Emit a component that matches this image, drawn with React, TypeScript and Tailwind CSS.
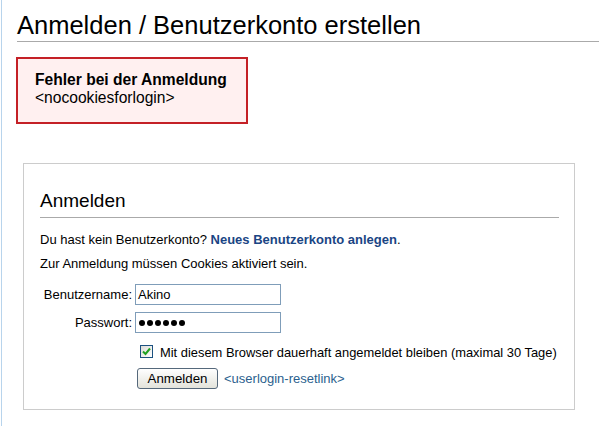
export default function App() {
  return (
    <div className="min-h-[426px] w-[599px] overflow-hidden bg-white pl-[1px] font-['Liberation_Sans',Arial,sans-serif] text-black">
      <div className="min-h-[426px] border-l border-[#b8d4ec] pl-[14px]">
        <h1 className="ml-[1px] border-b border-[#aaaaaa] pt-[10px] pb-[1px] text-[25.5px] leading-[30px] font-normal">
          Anmelden / Benutzerkonto erstellen
        </h1>

        <div className="mt-[15px] w-[232px] border-2 border-[#c42026] bg-[#fff0f0] pt-[12px] pb-[15px] pl-[17px] text-[15.6px] leading-[18px]">
          <div className="font-bold">Fehler bei der Anmeldung</div>
          <div>&lt;nocookiesforlogin&gt;</div>
        </div>

        <div className="mt-[39px] ml-[7px] w-[552px] border border-[#cccccc] pt-[25px] pr-[15px] pb-[20px] pl-[16px] text-[13px] leading-[18px]">
          <h2 className="border-b border-[#aaaaaa] pb-[4px] text-[19px] leading-[24px] font-normal">Anmelden</h2>
          <p className="mt-[13px]">
            Du hast kein Benutzerkonto?{" "}
            <span className="font-bold text-[#1a4584]">Neues Benutzerkonto anlegen</span>.
          </p>
          <p className="mt-[6px]">Zur Anmeldung müssen Cookies aktiviert sein.</p>

          <div className="mt-[11px] grid grid-cols-[92px_1fr] gap-x-[3px] gap-y-[7px]">
            <div className="text-right leading-[21px]">Benutzername:</div>
            <div className="h-[21px] w-[146px] border border-[#7f9db9] bg-white pl-[2px] leading-[19px]">Akino</div>
            <div className="text-right leading-[21px]">Passwort:</div>
            <div className="flex h-[21px] w-[146px] items-center gap-[2px] border border-[#7f9db9] bg-white pl-[3px]">
              {[0, 1, 2, 3, 4, 5].map((i) => (
                <span key={i} className="h-[6px] w-[6px] rounded-full bg-black" />
              ))}
            </div>
          </div>

          <div className="mt-[11px] ml-[100px] flex items-start">
            <span className="mt-[1px] flex h-[13px] w-[13px] shrink-0 items-center justify-center border border-[#1c5180] bg-gradient-to-br from-[#dcdcd7] to-white">
              <svg width="9" height="9" viewBox="0 0 9 9">
                <path d="M1 4.5 L3.5 7 L8 1.5" fill="none" stroke="#21a121" strokeWidth="2" />
              </svg>
            </span>
            <span className="ml-[7px] whitespace-nowrap text-[12.9px]">
              Mit diesem Browser dauerhaft angemeldet bleiben (maximal 30 Tage)
            </span>
          </div>

          <div className="mt-[6px] ml-[97px] flex items-center">
            <button className="h-[21px] w-[81px] rounded-[3px] border border-[#55687b] bg-gradient-to-b from-white to-[#e3e3db] text-[13.3px] leading-[19px] text-black">
              Anmelden
            </button>
            <span className="ml-[6px] text-[#2b5f8e]">&lt;userlogin-resetlink&gt;</span>
          </div>
        </div>
      </div>
    </div>
  );
}
